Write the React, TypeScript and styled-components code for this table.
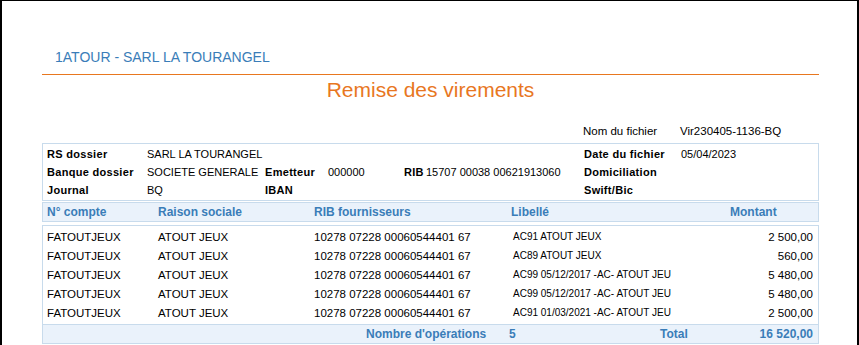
import React from "react";
import styled, { createGlobalStyle } from "styled-components";

const GlobalStyle = createGlobalStyle`
  body {
    margin: 0;
    background: #fff;
    font-family: "Liberation Sans", Arial, sans-serif;
    color: #000;
  }
`;

const BLUE = "#3a7db8";
const ORANGE = "#e8771f";
const LINE = "#c8dbec";
const SOFT = "#eaf2fb";

const Page = styled.div`
  box-sizing: border-box;
  width: 859px;
  min-height: 345px;
  border-top: 1px solid #000;
  border-left: 2px solid #000;
  border-right: 2px solid #000;
`;

const Sheet = styled.div`
  width: 777px;
  margin-left: 40px;
`;

const CompanyBar = styled.div`
  padding: 48px 0 9px 13px;
  font-size: 14px;
  line-height: 16px;
  color: ${BLUE};
  border-bottom: 1px solid ${ORANGE};
`;

const Title = styled.h1`
  margin: 3px 0 0;
  font-size: 21px;
  font-weight: normal;
  line-height: 24px;
  text-align: center;
  color: ${ORANGE};
`;

const FileRow = styled.div`
  display: flex;
  margin-top: 21px;
  padding-left: 541px;
  font-size: 11.5px;
  line-height: 16px;

  span:first-child {
    width: 97px;
  }
`;

const InfoBox = styled.div`
  display: grid;
  grid-template-columns: 100px 118px 63px 76px 22px 158px 97px 1fr;
  grid-auto-rows: 18px;
  align-items: center;
  margin-top: 4px;
  padding: 1px 0 1px 4px;
  border: 1px solid ${LINE};
  font-size: 11px;
`;

const Label = styled.span`
  font-weight: bold;
  letter-spacing: 0.3px;
  white-space: nowrap;
`;

const Value = styled.span`
  white-space: nowrap;
`;

const columns = "111px 156px 197px 1fr 120px";

const HeadRow = styled.div`
  display: grid;
  grid-template-columns: ${columns};
  margin-top: 1px;
  padding: 0 5px 0 4px;
  line-height: 18px;
  background: ${SOFT};
  border: 1px solid ${LINE};
  font-size: 12px;
  font-weight: bold;
  color: ${BLUE};
`;

const HeadCell = styled.span<{ $pad?: number }>`
  padding-left: ${(p) => p.$pad ?? 0}px;
  white-space: nowrap;
`;

const Body = styled.div`
  margin-top: 3px;
  padding: 1px 5px 2px 4px;
  border: 1px solid ${LINE};
  border-bottom: none;
`;

const Row = styled.div`
  display: grid;
  grid-template-columns: ${columns};
  align-items: center;
  height: 19px;
  font-size: 11.5px;
  white-space: nowrap;
`;

const Libelle = styled.span`
  padding-left: 2px;
  font-size: 10px;
`;

const Amount = styled.span`
  text-align: right;
`;

const Footer = styled.div`
  display: grid;
  grid-template-columns: 143px 151px 1fr auto;
  padding: 0 5px 0 323px;
  line-height: 18px;
  background: ${SOFT};
  border: 1px solid ${LINE};
  font-size: 12px;
  font-weight: bold;
  color: ${BLUE};
`;

const FootCell = styled.span<{ $right?: boolean }>`
  text-align: ${(p) => (p.$right ? "right" : "left")};
  white-space: nowrap;
`;

const lines = [
  { libelle: "AC91 ATOUT JEUX", montant: "2 500,00" },
  { libelle: "AC89 ATOUT JEUX", montant: "560,00" },
  { libelle: "AC99 05/12/2017 -AC- ATOUT JEU", montant: "5 480,00" },
  { libelle: "AC99 05/12/2017 -AC- ATOUT JEU", montant: "5 480,00" },
  { libelle: "AC91 01/03/2021 -AC- ATOUT JEU", montant: "2 500,00" },
];

export default function App() {
  return (
    <>
      <GlobalStyle />
      <Page>
        <Sheet>
          <CompanyBar>1ATOUR - SARL LA TOURANGEL</CompanyBar>
          <Title>Remise des virements</Title>

          <FileRow>
            <span>Nom du fichier</span>
            <span>Vir230405-1136-BQ</span>
          </FileRow>

          <InfoBox>
            <Label>RS dossier</Label>
            <Value>SARL LA TOURANGEL</Value>
            <span />
            <span />
            <span />
            <span />
            <Label>Date du fichier</Label>
            <Value>05/04/2023</Value>

            <Label>Banque dossier</Label>
            <Value>SOCIETE GENERALE</Value>
            <Label>Emetteur</Label>
            <Value>000000</Value>
            <Label>RIB</Label>
            <Value>15707 00038 00621913060</Value>
            <Label>Domiciliation</Label>
            <Value />

            <Label>Journal</Label>
            <Value>BQ</Value>
            <Label>IBAN</Label>
            <Value />
            <span />
            <span />
            <Label>Swift/Bic</Label>
            <Value />
          </InfoBox>

          <HeadRow>
            <HeadCell>N° compte</HeadCell>
            <HeadCell>Raison sociale</HeadCell>
            <HeadCell>RIB fournisseurs</HeadCell>
            <HeadCell>Libellé</HeadCell>
            <HeadCell $pad={37}>Montant</HeadCell>
          </HeadRow>

          <Body>
            {lines.map((l, i) => (
              <Row key={i}>
                <span>FATOUTJEUX</span>
                <span>ATOUT JEUX</span>
                <span>10278 07228 00060544401 67</span>
                <Libelle>{l.libelle}</Libelle>
                <Amount>{l.montant}</Amount>
              </Row>
            ))}
          </Body>

          <Footer>
            <FootCell>Nombre d'opérations</FootCell>
            <FootCell>5</FootCell>
            <FootCell>Total</FootCell>
            <FootCell $right>16 520,00</FootCell>
          </Footer>
        </Sheet>
      </Page>
    </>
  );
}
